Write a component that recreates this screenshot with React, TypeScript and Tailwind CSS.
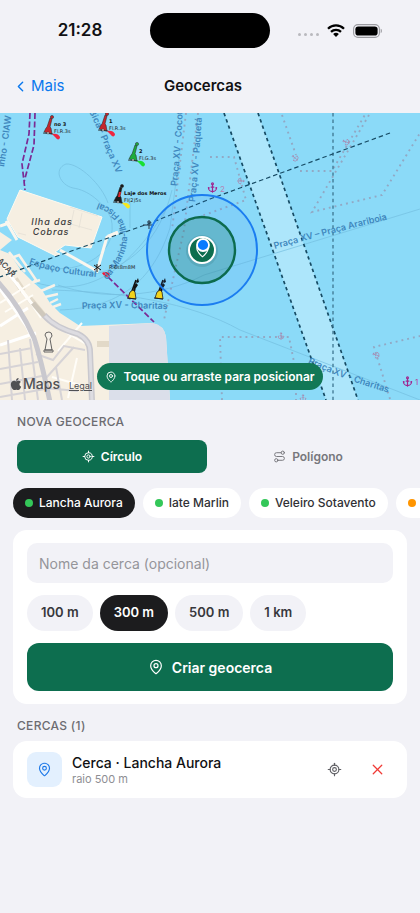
import { useState } from "react";
import { FaApple } from "react-icons/fa";
import {
  Anchor,
  ChevronLeft,
  LocateFixed,
  MapPin,
  Route,
  X,
} from "lucide-react";

interface Vessel {
  name: string;
  dot: string;
}

interface BuoyProps {
  x: number;
  y: number;
  color: string;
  flare?: string;
  accent?: string;
  title?: string;
  light?: string;
}

const vessels: Vessel[] = [
  { name: "Lancha Aurora", dot: "bg-[#34c759]" },
  { name: "Iate Marlin", dot: "bg-[#34c759]" },
  { name: "Veleiro Sotavento", dot: "bg-[#34c759]" },
];

const radii = ["100 m", "300 m", "500 m", "1 km"];

const StatusBar = () => (
  <div className="grid grid-cols-[1fr_120px_1fr] items-center pt-[13px]">
    <span className="pl-[10px] text-center text-[17px] font-semibold leading-[35px]">
      21:28
    </span>
    <div className="h-[35px] rounded-full bg-black" />
    <div className="flex items-center gap-2 pl-7">
      <div className="flex gap-[3px] pt-2">
        <i className="size-[3px] rounded-full bg-[#b9b9be]" />
        <i className="size-[3px] rounded-full bg-[#b9b9be]" />
        <i className="size-[3px] rounded-full bg-[#b9b9be]" />
        <i className="size-[3px] rounded-full bg-[#b9b9be]" />
      </div>
      <svg width="18" height="13" viewBox="0 0 18 13" aria-hidden="true">
        <g fill="none" stroke="#000" strokeWidth="2.3">
          <path d="M1 4.7a11.4 11.4 0 0 1 16 0" />
          <path d="M4 7.9a7.2 7.2 0 0 1 10 0" />
        </g>
        <path d="M9 13 6.1 10.1a4.1 4.1 0 0 1 5.8 0Z" />
      </svg>
      <svg width="30" height="14" viewBox="0 0 30 14" aria-hidden="true">
        <rect x=".6" y=".6" width="25.8" height="12.8" rx="4.4" fill="none" stroke="#9b9ba0" strokeWidth="1.1" />
        <rect x="2.4" y="2.4" width="22.2" height="9.2" rx="2.8" />
        <path d="M27.7 4.8c1.6.5 1.6 3.9 0 4.4Z" fill="#9b9ba0" />
      </svg>
    </div>
  </div>
);

const Buoy = ({ x, y, color, flare, accent, title, light }: BuoyProps) => (
  <g transform={`translate(${x} ${y})`}>
    <path d="M-4 6 4 8 3 2 2 1 4-7 2-8-1 1-2 2Z" fill={color} stroke="#222" strokeWidth=".5" />
    <circle cx="4" cy="-9" r="1.6" fill={color} stroke="#222" strokeWidth=".5" />
    <path d="M-5 7 5 8" stroke="#222" strokeWidth=".8" />
    <circle cx="0" cy="7" r="1" fill="#fff" stroke="#222" strokeWidth=".4" />
    {accent && <path d="m0 2 1-5 2 0-1 5Z" fill={accent} />}
    {flare && <path d="m4 8c3-1 7 0 8 3 0 3-3 3-4 1Z" fill={flare} />}
    <text x="6" y="0" fontSize="5" fontWeight="700" fill="#111">
      {title}
    </text>
    <text x="6" y="7" fontSize="5" fill="#222">
      {light}
    </text>
  </g>
);

const YellowBuoy = ({ x, y }: { x: number; y: number }) => (
  <g transform={`translate(${x} ${y})`}>
    <path d="M0-3 4-14" stroke="#111" strokeWidth="1.6" />
    <path d="m1-3 1-5 2 1-1 5ZM2-8l2-3 2 2-2 3ZM4-12l2-4 1 4-2 1Z" fill="#111" />
    <path d="M-4 4-2-2 1-4 3-2 4 5Z" fill="#f2d21b" stroke="#222" strokeWidth=".8" />
    <path d="M-5 4 4 5" stroke="#222" />
  </g>
);

const HarborMap = () => (
  <svg
    className="block size-full"
    viewBox="0 113 420 287"
    preserveAspectRatio="xMidYMid slice"
    role="img"
    aria-label="Mapa"
  >
    <defs>
      <path id="r-arariboia" d="M275 249Q330 233 410 214" />
      <path id="r-charitas" d="M82 309Q125 307 185 310" />
      <path id="r-charitas-2" d="M308 363Q345 381 410 399" />
      <path id="r-cultural" d="M29 264Q60 275 110 278" />
      <path id="r-fiscal" d="M107 280C120 265 131 246 126 229C122 214 110 205 85 199" />
      <path id="r-cocota" d="M177 186Q181 150 184 90" />
      <path id="r-paqueta" d="M195 202Q200 160 203 90" />
      <path id="r-bica" d="M86 105Q102 138 124 192" />
      <path id="r-ciaw" d="M4 167Q9 140 14 90" />
      <path id="r-car" d="M-3 261 18 284" />
    </defs>

    <rect y="113" width="420" height="287" fill="#8bdaf8" />
    <path d="M224 113H258L358 400H326Z" fill="#ade6fb" />

    {/* depth contours and ferry routes */}
    <g fill="none" stroke="#74bfe0" strokeWidth=".7">
      <path d="M108 203C102 185 79 163 66 164C53 169 60 185 73 188C88 190 103 202 111 218C119 250 86 276 40 267" />
      <path d="M130 199V228M58 285C100 300 160 298 204 275L420 209" />
      <path d="M60 310C110 308 150 290 170 228L180 150" />
      <path d="M52 290C120 292 190 302 240 330L420 400" />
      <path d="M37 283C90 298 130 270 168 206M90 275C130 268 160 240 172 190" />
    </g>

    {/* anchorage limits */}
    <g fill="none" stroke="#92a8c4" strokeWidth="1.9" strokeDasharray="1.9 4">
      <path d="M282 115 296 155M300 171H332L366 113M369 115 312 212 382 195 420 133" />
      <path d="M210 157H234L246 200 210 213 184 222" />
      <path d="M222 400 220 337H289L296 372V400M390 399 374 347 420 336" />
      <path d="M186 113 172 230M198 113 184 230 164 320" />
    </g>

    {/* Ilha das Cobras */}
    <path d="M0 226 12 222M6 221 17 240M60 250 97 271 107 237 118 232" fill="none" stroke="#faf6ee" strokeWidth="3" />
    <path d="m20 190 82 27-11 31-26-3-10 7 5 2-4 2-38-19L7 219Z" fill="#f6efe2" stroke="#fffaf0" strokeWidth="1" />
    <path d="m70 207 28 9m-24-6-4 19m12-16-3 15m-12-5 25 7M18 233l8 2" fill="none" stroke="#e5dfd5" strokeWidth=".8" />
    <path d="m107 235 10-4 2 3-9 4Z" fill="#faf6ee" />

    {/* city */}
    <path d="M0 232 12 240 0 250Z" fill="#f6efe2" />
    <path d="M0 250 10 254 20 269 34 283 42 290 50 303 60 313 80 326 152 323Q164 325 166 337L170 400H0Z" fill="#f6efe2" />
    <path d="M109 326 153 323Q164 325 166 337L170 400H109Z" fill="#dbdfea" />
    <path d="M9 252 25 272M14 257l5-2 17 25-4 3M34 282l6-2M41 291l14-6M45 297l13-3M50 303l8-4M53 307l8-3" fill="none" stroke="#f8f2e8" strokeWidth="2.5" />
    <path d="m15 279 8 12m6 7 15 18M97 344h12" stroke="#e2d9c8" strokeWidth="6" />
    <path d="M-2 286 27 327 38 350M0 326l28-18M0 345l36-12M0 262l42 55" fill="none" stroke="#fff" strokeWidth="3" />
    <path d="M0 303 30 284M5 312l28-17M17 282l24 36M48 322l38 22M58 351l24-28M68 398l9-40M52 377l28 8" fill="none" stroke="#fffdf8" strokeWidth="2" />
    <g fill="none" stroke="#d6d3d6" strokeWidth="2">
      <path d="M0 354 32 348M0 369l38-7M0 384l42-8M0 397l45-8M8 340l4 60M20 348l5 52M30 339l8 61" />
      <path d="M36 354 53 360 64 346 85 350M46 378l28-31M44 388l34 3M56 367l6 33" />
    </g>
    <g fill="none" stroke="#c9c8ce">
      <path d="M-2 282Q20 306 34 338Q41 359 50 402" strokeWidth="5" />
      <path d="M44 315Q55 328 78 334Q90 340 90 352L92 402" strokeWidth="6" />
    </g>
    <path d="M45 316Q56 328 78 334Q90 340 90 352L92 402" fill="none" stroke="#dddce1" strokeWidth="3" />
    <path d="M33 303 44 316" stroke="#cfc8bc" strokeWidth="5" />
    <path d="M45 335Q45 332 49 332Q52 332 52 336L50 339 52 350H45L47 339ZM44 350h9v2h-9Z" fill="#f6f1e8" stroke="#555" strokeWidth=".9" />

    {/* shipping lanes */}
    <g fill="none" stroke="#164a63" strokeWidth="1.7" strokeDasharray="3.4 3.2">
      <path d="M224 113 326 400M258 113 358 400" />
      <path d="M333 113V400" stroke="#3d7690" strokeWidth="1.3" />
      <path d="M390 133 210 199 148 224 60 255 0 277" strokeWidth="1.2" strokeDasharray="4.5 3" />
    </g>
    <g fill="none" stroke="#7b2a94" strokeWidth="1.7" strokeDasharray="6 2.5">
      <path d="M30 113 29 134 22 164 25 190M35 113 34 145 24 182" />
      <path d="M108 277 154 322" />
    </g>
    <path d="M143 225h11M149 220v9M147 222h4" fill="none" stroke="#234" strokeWidth="1" />
    <path d="m94 265 7 5m-7 0 7-5m-4-1v8" stroke="#111" strokeWidth="1" />
    <path d="m102 273c3-2 8-1 8 2-2 3-6 2-8-2Z" fill="#ef1b2d" />

    <g fill="#3f87bd" fontSize="9" fontWeight="600">
      <text><textPath href="#r-arariboia">Praça XV – Praça Arariboia</textPath></text>
      <text><textPath href="#r-charitas">Praça XV - Charitas</textPath></text>
      <text><textPath href="#r-charitas-2">Praça XV - Charitas</textPath></text>
      <text><textPath href="#r-cultural">Espaço Cultural</textPath></text>
      <text><textPath href="#r-fiscal">da Marinha-Ilha Fiscal</textPath></text>
      <text><textPath href="#r-cocota">Praça XV - Cocotá</textPath></text>
      <text><textPath href="#r-paqueta">Praça XV - Paquetá</textPath></text>
      <text><textPath href="#r-bica">a Bica - Praça XV</textPath></text>
      <text><textPath href="#r-ciaw">inho - CIAW</textPath></text>
    </g>
    <text fontSize="8" fontWeight="600" fill="#4d4d4d"><textPath href="#r-car">ACAR</textPath></text>
    <g fill="#3c3c3c" fontSize="9" fontStyle="italic" fontWeight="500" textAnchor="middle" className="tracking-widest">
      <text x="52" y="225">Ilha das</text>
      <text x="51" y="235">Cobras</text>
    </g>

    <g className="font-['DejaVu_Sans',sans-serif]">
      <Buoy x={48} y={126} color="#c4272d" flare="#ef2640" title="no 3" light="Fl.R.3s" />
      <Buoy x={103} y={123} color="#c4272d" flare="#ef2640" title="1" light="Fl.R.3s" />
      <Buoy x={133} y={153} color="#1eab3c" flare="#18e032" title="2" light="Fl.G.3s" />
      <Buoy x={118} y={195} color="#1b1b1b" flare="#f6e71d" accent="#e0262c" title="Laje dos Meros" light="Fl(2)5s" />
      <text x="109" y="269" fontSize="5" fill="#222">R.6s8m8M</text>
    </g>
    <YellowBuoy x={132} y={294} />
    <YellowBuoy x={159} y={294} />

    <Anchor x="207" y="182" width="11" height="11" color="#a0268f" strokeWidth={2.6} />
    <text x="220" y="192" fontSize="8" fill="#b583b4">2</text>
    <Anchor x="402" y="376" width="11" height="11" color="#a0268f" strokeWidth={2.6} />
    <text x="415" y="385" fontSize="8" fill="#b04a9c">1</text>
    <g color="#ab86ad">
      <Anchor x="277" y="332" width="8" height="8" />
      <Anchor x="291" y="154" width="8" height="8" transform="rotate(-50 295 158)" />
      <Anchor x="342" y="138" width="8" height="8" transform="rotate(-70 346 142)" />
      <Anchor x="237" y="177" width="8" height="8" transform="rotate(90 241 181)" />
      <Anchor x="372" y="351" width="8" height="8" transform="rotate(-70 376 355)" />
      <Anchor x="299" y="394" width="8" height="8" />
    </g>

    {/* current fence and the one being placed */}
    <circle cx="202" cy="250" r="55" fill="#3c95f5" fillOpacity=".13" stroke="#1b7df0" strokeWidth="2" />
    <circle cx="202" cy="250" r="33" fill="#0d6e4f" fillOpacity=".24" stroke="#0c6b4e" strokeWidth="2.4" />
    <circle cx="202" cy="251" r="16" fill="#0b3f42" fillOpacity=".12" />
    <circle cx="202" cy="250" r="13" fill="#0d6e4f" stroke="#fff" strokeWidth="2" />
    <MapPin x="194" y="241" width="17" height="17" color="#fff" strokeWidth={1.6} />
    <circle cx="203" cy="245" r="6" fill="#087bff" stroke="#fff" strokeWidth="1.8" />
  </svg>
);

export default function App() {
  const [shape, setShape] = useState("circle");
  const [vessel, setVessel] = useState("Lancha Aurora");
  const [radius, setRadius] = useState("300 m");

  const shapeClass = (active: boolean) =>
    active ? "bg-[#0d6e4f] text-white" : "text-[#77777c]";

  return (
    <main className="min-h-screen overflow-hidden bg-[#f2f2f7] font-['Inter',sans-serif] text-[#111113]">
      <StatusBar />

      <header className="mt-3 grid h-[53px] grid-cols-[1fr_auto_1fr] items-center pl-3 pr-[26px]">
        <button className="flex items-center gap-[2px] justify-self-start text-[15px] text-[#0a78ee]">
          <ChevronLeft size={17} strokeWidth={2} />
          Mais
        </button>
        <h1 className="text-[15px] font-semibold">Geocercas</h1>
      </header>

      <section className="relative h-[287px] overflow-hidden">
        <HarborMap />
        <div className="absolute bottom-2 left-[9px] flex items-end gap-[9px] text-[#505054]">
          <span className="flex items-center text-[14px] font-medium leading-4">
            <FaApple size={14} />
            Maps
          </span>
          <a href="#legal" className="text-[9px] leading-3 underline">
            Legal
          </a>
        </div>
        <div className="absolute inset-x-0 bottom-[10px] flex justify-center">
          <p className="flex h-[27px] items-center gap-[6px] rounded-full bg-[#127856] px-2 text-[12px] font-semibold text-white">
            <MapPin size={12} strokeWidth={1.8} />
            Toque ou arraste para posicionar
          </p>
        </div>
      </section>

      <h2 className="mx-[17px] mt-[14px] text-[12px] font-medium leading-4 tracking-wide text-[#6c6c71]">
        NOVA GEOCERCA
      </h2>

      <div className="mx-[17px] mt-[10px] grid grid-cols-2 gap-[6px] text-[12px] font-semibold">
        <button
          aria-pressed={shape === "circle"}
          onClick={() => setShape("circle")}
          className={`flex h-[33px] items-center justify-center gap-[6px] rounded-[8px] ${shapeClass(shape === "circle")}`}
        >
          <LocateFixed size={13} strokeWidth={1.8} />
          Círculo
        </button>
        <button
          aria-pressed={shape === "polygon"}
          onClick={() => setShape("polygon")}
          className={`flex h-[33px] items-center justify-center gap-[6px] rounded-[8px] ${shapeClass(shape === "polygon")}`}
        >
          <Route size={13} strokeWidth={1.8} />
          Polígono
        </button>
      </div>

      <div className="mt-[15px] flex gap-2 overflow-hidden pl-[13px] text-[12px] font-medium">
        {vessels.map(({ name, dot }: Vessel) => (
          <button
            key={name}
            aria-pressed={vessel === name}
            onClick={() => setVessel(name)}
            className={`flex h-[30px] shrink-0 items-center gap-[6px] rounded-full px-3 ${
              vessel === name ? "bg-[#1c1c1e] text-white" : "bg-white text-[#303034]"
            }`}
          >
            <span className={`size-2 rounded-full ${dot}`} />
            {name}
          </button>
        ))}
        <button
          aria-label="Próxima embarcação"
          className="flex h-[30px] w-24 shrink-0 items-center rounded-full bg-white px-3"
        >
          <span className="size-2 rounded-full bg-[#ff9500]" />
        </button>
      </div>

      <form
        className="mx-[13px] mt-3 flex flex-col gap-3 rounded-[14px] bg-white px-[14px] py-[13px]"
        onSubmit={(e) => e.preventDefault()}
      >
        <input
          type="text"
          aria-label="Nome da cerca"
          placeholder="Nome da cerca (opcional)"
          className="h-10 w-full rounded-[10px] bg-[#f2f2f7] px-3 text-[14px] outline-none placeholder:text-[#95959a]"
        />
        <div className="flex gap-[7px] text-[13px] font-semibold">
          {radii.map((item) => (
            <button
              key={item}
              type="button"
              aria-pressed={radius === item}
              onClick={() => setRadius(item)}
              className={`h-9 rounded-full px-[14px] ${
                radius === item ? "bg-[#1c1c1e] text-white" : "bg-[#f2f2f7] text-[#38383c]"
              }`}
            >
              {item}
            </button>
          ))}
        </div>
        <button
          type="submit"
          className="flex h-12 items-center justify-center gap-2 rounded-[12px] bg-[#0d6e4f] text-[14px] font-semibold text-white"
        >
          <MapPin size={16} strokeWidth={1.8} />
          Criar geocerca
        </button>
      </form>

      <h2 className="mx-[17px] mt-[14px] text-[12px] font-medium leading-4 tracking-wide text-[#6c6c71]">
        CERCAS (1)
      </h2>

      <div className="mx-[13px] mt-[7px] flex items-center rounded-[14px] bg-white px-[14px] py-[11px]">
        <div className="flex size-[35px] items-center justify-center rounded-[9px] bg-[#e3f0fe] text-[#1c78e8]">
          <MapPin size={15} strokeWidth={1.8} />
        </div>
        <div className="ml-[10px] grow">
          <p className="text-[14px] font-medium leading-[18px]">
            Cerca · Lancha Aurora
          </p>
          <p className="text-[11px] leading-[14px] text-[#8e8e93]">raio 500 m</p>
        </div>
        <button aria-label="Centralizar" className="flex size-8 items-center justify-center text-[#5f5f64]">
          <LocateFixed size={15} strokeWidth={1.8} />
        </button>
        <button aria-label="Excluir" className="ml-[11px] flex size-8 items-center justify-center text-[#f03a35]">
          <X size={17} strokeWidth={1.8} />
        </button>
      </div>
    </main>
  );
}
